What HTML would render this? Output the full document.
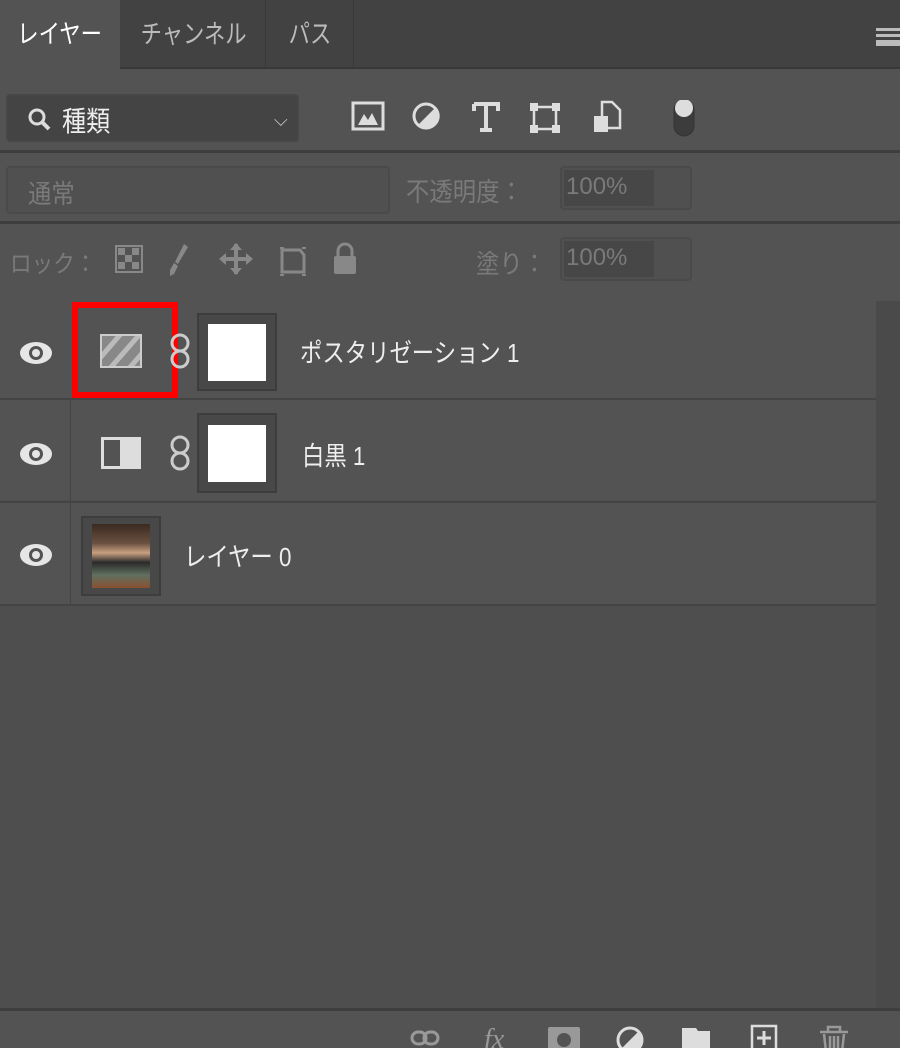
<!DOCTYPE html>
<html><head><meta charset="utf-8"><style>
*{margin:0;padding:0;box-sizing:border-box}
body{width:900px;height:1048px;background:#4e4e4e;font-family:"Liberation Sans","Noto Sans CJK JP",sans-serif;position:relative;overflow:hidden;color:#ddd}
.a{position:absolute}
.tabbar{left:0;top:0;width:900px;height:69px;background:#424242;border-bottom:2px solid #383838}
.tab{top:0;height:69px;font-size:26px;padding-top:14px;text-align:center;color:#bbb}
.tab span{display:inline-block;transform:scaleX(0.82)}
.top{left:0;top:69px;width:900px;height:232px;background:#535353}
.box{border:2px solid #474747;border-radius:4px;background:#484848}
.sep{left:0;width:900px;height:3px;background:#3e3e3e}
.row{left:0;width:876px;background:#535353}
.thumb{border:2px solid #3d3d3d;background:#484848}
.txt{font-size:26px;color:#eee;transform:scaleX(0.86);transform-origin:left;white-space:nowrap}
.dim{color:#7a7a7a;font-size:26px;transform:scaleX(0.9);transform-origin:left;white-space:nowrap}
</style></head><body>
<div class="a tabbar"></div>
<div class="a tab" style="left:0;width:120px;background:#535353;height:71px;color:#fff"><span>レイヤー</span></div>
<div class="a tab" style="left:122px;width:144px;border-right:1px solid #383838"><span>チャンネル</span></div>
<div class="a tab" style="left:268px;width:86px;border-right:1px solid #383838"><span>パス</span></div>
<div class="a" style="left:876px;top:28px;width:24px;height:18px;border-top:3px solid #bbb;border-bottom:3px solid #bbb"><div style="margin-top:3px;height:3px;background:#bbb"></div><div style="margin-top:3px;height:3px;background:#bbb"></div></div>
<div class="a top"></div>
<div class="a box" style="left:6px;top:94px;width:293px;height:48px;background:#444"></div>
<svg class="a" style="left:26px;top:106px" width="28" height="28"><circle cx="11" cy="11" r="7" stroke="#ddd" stroke-width="3" fill="none"/><path d="M16 16 L23 23" stroke="#ddd" stroke-width="4"/></svg>
<div class="a txt" style="left:62px;top:100px;font-size:28px">種類</div>
<div class="a" style="left:274px;top:110px;color:#ccc;font-size:18px">⌵</div>
<svg class="a" style="left:350px;top:100px" width="350" height="40">
<rect x="3" y="3" width="30" height="26" fill="none" stroke="#ddd" stroke-width="3"/><path d="M8 25 L14 14 L18 20 L22 13 L28 25Z" fill="#ddd"/>
<circle cx="76" cy="16" r="12" fill="none" stroke="#ddd" stroke-width="3"/><path d="M68 25 L86 7 A12 12 0 0 1 68 25Z" fill="#ddd"/>
<path d="M124 4 H148 V11 M136 4 V30 M130 30 H142 M124 4 V11" stroke="#ddd" stroke-width="4" fill="none"/>
<rect x="184" y="7" width="22" height="22" fill="none" stroke="#ddd" stroke-width="2.5"/><g fill="#ddd"><rect x="180" y="3" width="8" height="8"/><rect x="202" y="3" width="8" height="8"/><rect x="180" y="25" width="8" height="8"/><rect x="202" y="25" width="8" height="8"/></g>
<path d="M252 2 H262 L270 10 V28 H252Z" fill="none" stroke="#ddd" stroke-width="2.5"/><rect x="244" y="16" width="14" height="16" fill="#ddd"/>
<rect x="324" y="0" width="20" height="36" rx="10" fill="#3c3c3c" stroke="#333"/><circle cx="334" cy="8" r="9" fill="#ddd"/>
</svg>
<div class="a sep" style="top:150px"></div>
<div class="a box" style="left:6px;top:166px;width:384px;height:48px;background:#505050;border-color:#4a4a4a"></div>
<div class="a dim" style="left:28px;top:174px">通常</div>
<div class="a dim" style="left:406px;top:172px">不透明度：</div>
<div class="a box" style="left:560px;top:166px;width:132px;height:44px;background:#505050;border-color:#4a4a4a"></div>
<div class="a" style="left:564px;top:170px;width:90px;height:36px;background:#474747;color:#7a7a7a;font-size:24px;padding:3px 2px">100%</div>
<div class="a sep" style="top:221px"></div>
<div class="a dim" style="left:10px;top:244px;font-size:24px">ロック：</div>
<svg class="a" style="left:114px;top:242px" width="250" height="36"><g fill="#888"><rect x="2" y="4" width="26" height="26" fill="none" stroke="#888" stroke-width="2"/><rect x="4" y="6" width="7" height="7"/><rect x="18" y="6" width="7" height="7"/><rect x="11" y="13" width="7" height="7"/><rect x="4" y="20" width="7" height="7"/><rect x="18" y="20" width="7" height="7"/></g><path d="M70 2 L74 5 L64 22 L61 20Z M60 21 L64 24 L60 32 L56 34 L56 28Z" fill="#888"/><path d="M122 2 V32 M107 17 H137" stroke="#888" stroke-width="4"/><path d="M116 8 L122 1 L128 8Z M116 26 L122 33 L128 26Z M112 11 L105 17 L112 23Z M132 11 L139 17 L132 23Z" fill="#888"/><path d="M168 8 H186 L190 13 V30 H168Z" fill="none" stroke="#888" stroke-width="3"/><path d="M166 6 H170 M188 6 H192 M166 33 H170 M188 33 H192" stroke="#888" stroke-width="2"/><rect x="220" y="14" width="22" height="18" rx="2" fill="#888"/><path d="M224 15 V9 A7 7 0 0 1 238 9 V15" fill="none" stroke="#888" stroke-width="3"/></svg>
<div class="a dim" style="left:476px;top:244px;font-size:26px">塗り：</div>
<div class="a box" style="left:560px;top:237px;width:132px;height:44px;background:#505050;border-color:#4a4a4a"></div>
<div class="a" style="left:564px;top:241px;width:90px;height:36px;background:#474747;color:#7a7a7a;font-size:24px;padding:3px 2px">100%</div>
<div class="a" style="left:876px;top:301px;width:24px;height:709px;background:#4a4a4a"></div>
<div class="a row" style="top:301px;height:97px"></div>
<div class="a row" style="top:400px;height:100px"></div>
<div class="a row" style="top:503px;height:101px"></div>
<div class="a" style="left:0;top:398px;width:876px;height:2px;background:#444"></div>
<div class="a" style="left:0;top:501px;width:876px;height:2px;background:#444"></div>
<div class="a" style="left:0;top:604px;width:876px;height:2px;background:#444"></div>
<div class="a" style="left:70px;top:400px;width:1px;height:204px;background:#444"></div>
<svg class="a" style="left:18px;top:340px" width="36" height="240"><g fill="#e6e6e6"><ellipse cx="18" cy="13" rx="16" ry="11"/><ellipse cx="18" cy="114" rx="16" ry="11"/><ellipse cx="18" cy="215" rx="16" ry="11"/></g><g fill="#535353"><circle cx="18" cy="13" r="7"/><circle cx="18" cy="114" r="7"/><circle cx="18" cy="215" r="7"/></g><g fill="#e6e6e6"><circle cx="18" cy="13" r="4"/><circle cx="18" cy="114" r="4"/><circle cx="18" cy="215" r="4"/></g></svg>
<div class="a" style="left:72px;top:302px;width:106px;height:96px;border:6px solid #f00"></div>
<svg class="a" style="left:100px;top:334px" width="44" height="36"><defs><clipPath id="c"><rect x="2" y="2" width="38" height="30"/></clipPath></defs><rect x="1" y="1" width="40" height="32" fill="#888" stroke="#ccc" stroke-width="2"/><g clip-path="url(#c)" stroke="#bbb" stroke-width="5"><path d="M-5 30 L25 -5 M5 40 L40 0 M20 45 L50 10"/></g></svg>
<svg class="a" style="left:170px;top:333px" width="20" height="40"><path d="M10 2 a7 7 0 0 0 0 16 a7 7 0 0 0 0 -16z M10 18 a7 7 0 0 0 0 16 a7 7 0 0 0 0 -16z" fill="none" stroke="#ccc" stroke-width="3"/></svg>
<div class="a thumb" style="left:197px;top:313px;width:80px;height:78px;padding:9px 9px 0 9px"><div style="background:#fff;width:58px;height:57px"></div></div>
<div class="a txt" style="left:300px;top:333px">ポスタリゼーション 1</div>
<svg class="a" style="left:100px;top:436px" width="44" height="36"><rect x="2" y="2" width="38" height="30" fill="#ddd" stroke="#ddd" stroke-width="2"/><rect x="4" y="4" width="16" height="26" fill="#535353"/></svg>
<svg class="a" style="left:170px;top:435px" width="20" height="40"><path d="M10 2 a7 7 0 0 0 0 16 a7 7 0 0 0 0 -16z M10 18 a7 7 0 0 0 0 16 a7 7 0 0 0 0 -16z" fill="none" stroke="#ccc" stroke-width="3"/></svg>
<div class="a thumb" style="left:197px;top:413px;width:80px;height:80px;padding:10px 9px 0 9px"><div style="background:#fff;width:58px;height:57px"></div></div>
<div class="a txt" style="left:302px;top:436px">白黒 1</div>
<div class="a thumb" style="left:81px;top:516px;width:80px;height:80px;padding:6px 9px"><div style="width:58px;height:64px;background:linear-gradient(180deg,#3a2a20 0%,#6a5040 30%,#c9a080 45%,#2a2a2a 60%,#607060 80%,#8a5030 100%)"></div></div>
<div class="a txt" style="left:184px;top:537px">レイヤー 0</div>
<div class="a" style="left:0;top:1008px;width:900px;height:3px;background:#3e3e3e"></div>
<div class="a" style="left:0;top:1011px;width:900px;height:37px;background:#535353"></div>
<svg class="a" style="left:400px;top:1020px" width="500" height="28"><g fill="none" stroke="#999" stroke-width="3"><rect x="12" y="12" width="14" height="12" rx="6"/><rect x="24" y="12" width="14" height="12" rx="6"/></g><text x="84" y="28" font-size="28" font-style="italic" fill="#999" font-family="Liberation Serif">fx</text><rect x="148" y="7" width="32" height="25" rx="2" fill="#999"/><circle cx="164" cy="20" r="7" fill="#535353"/><circle cx="230" cy="20" r="12" fill="none" stroke="#ddd" stroke-width="3"/><path d="M221 29 L239 11 A12 12 0 0 1 221 29Z" fill="#ddd"/><path d="M282 8 H296 L298 11 H310 V30 H282Z" fill="#ddd"/><rect x="352" y="6" width="24" height="24" fill="none" stroke="#ddd" stroke-width="2.5"/><path d="M364 11 V25 M357 18 H371" stroke="#ddd" stroke-width="3"/><path d="M420 12 H448 M428 12 V7 H440 V12 M424 14 L426 32 H442 L444 14 M430 16 V30 M434 16 V30 M438 16 V30" fill="none" stroke="#999" stroke-width="2.5"/></svg>
</body></html>
